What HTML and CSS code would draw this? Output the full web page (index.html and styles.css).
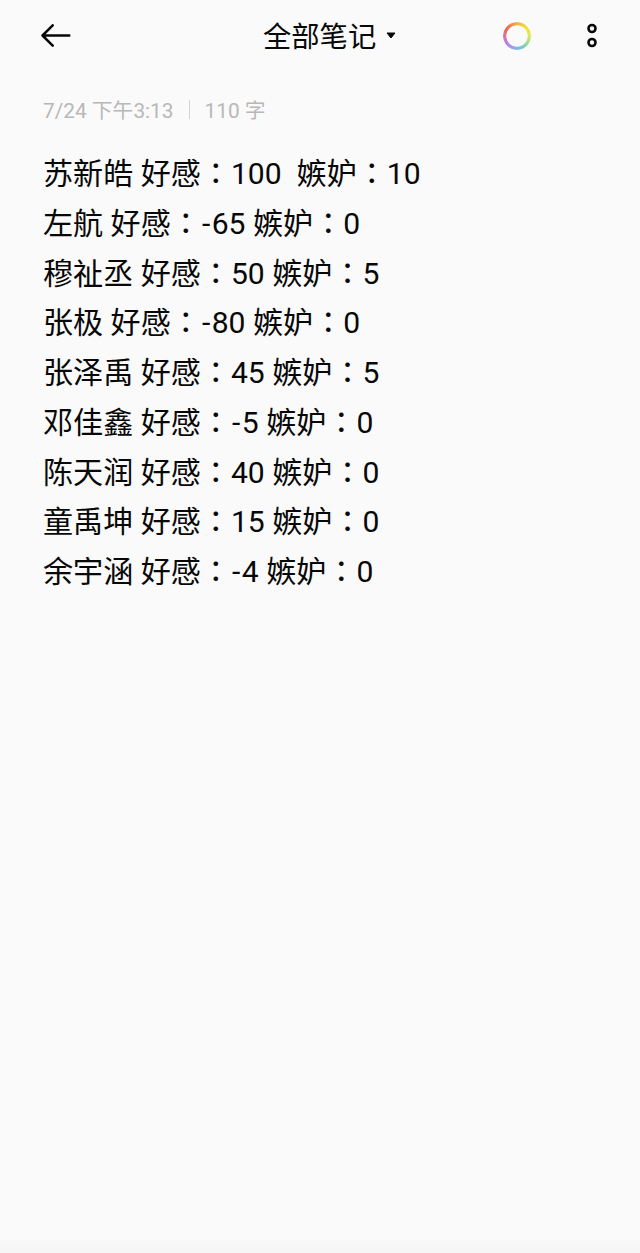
FILE: index.html
```html
<!DOCTYPE html>
<html lang="zh-CN">
<head>
<meta charset="utf-8">
<title>全部笔记</title>
<link rel="stylesheet" href="styles.css">
</head>
<body>
<header class="bar">
  <svg class="back" width="32" height="24" viewBox="0 0 32 24"><path d="M29.3 11.5H2.5M12.7 1.3L2.5 11.5L12.7 21.7"/></svg>
  <h1 class="title">全部笔记</h1>
  <svg class="caret" width="10" height="8" viewBox="0 0 10 8"><path d="M1 1H9L5 6Z"/></svg>
  <div class="ring"></div>
  <svg class="more" width="12" height="26" viewBox="0 0 12 26"><circle cx="6" cy="5.5" r="3.5"/><circle cx="6" cy="19.5" r="3.5"/></svg>
</header>
<div class="meta"><span>7/24 下午3:13</span><i class="sep"></i><span>110 字</span></div>
<main class="note">
<p>苏新皓 好感<span class="colon" lang="zh-TW">：</span>100&nbsp; 嫉妒<span class="colon" lang="zh-TW">：</span>10</p>
<p>左航 好感<span class="colon" lang="zh-TW">：</span><span class="minus">-</span>65 嫉妒<span class="colon" lang="zh-TW">：</span>0</p>
<p>穆祉丞 好感<span class="colon" lang="zh-TW">：</span>50 嫉妒<span class="colon" lang="zh-TW">：</span>5</p>
<p>张极 好感<span class="colon" lang="zh-TW">：</span><span class="minus">-</span>80 嫉妒<span class="colon" lang="zh-TW">：</span>0</p>
<p>张泽禹 好感<span class="colon" lang="zh-TW">：</span>45 嫉妒<span class="colon" lang="zh-TW">：</span>5</p>
<p>邓佳鑫 好感<span class="colon" lang="zh-TW">：</span><span class="minus">-</span>5 嫉妒<span class="colon" lang="zh-TW">：</span>0</p>
<p>陈天润 好感<span class="colon" lang="zh-TW">：</span>40 嫉妒<span class="colon" lang="zh-TW">：</span>0</p>
<p>童禹坤 好感<span class="colon" lang="zh-TW">：</span>15 嫉妒<span class="colon" lang="zh-TW">：</span>0</p>
<p>余宇涵 好感<span class="colon" lang="zh-TW">：</span><span class="minus">-</span>4 嫉妒<span class="colon" lang="zh-TW">：</span>0</p>
</main>
</body>
</html>
```
FILE: styles.css
```css
body { margin: 0; box-sizing: border-box; min-height: 1253px; background: linear-gradient(#fafafa 1238px, #f6f6f6 1245px); color: #080808; font-family: Roboto, "Noto Sans CJK SC", sans-serif; }
.bar { display: flex; align-items: center; height: 72px; padding-left: 40px; }
.back { fill: none; stroke: #080808; stroke-width: 2.5; stroke-linecap: round; stroke-linejoin: round; }
.title { margin: 0 0 0 191px; padding-top: 4px; width: 114px; font-size: 28.3px; font-weight: 400; line-height: 40px; white-space: nowrap; }
.caret { margin-left: 9px; fill: #080808; stroke: #080808; stroke-linejoin: round; }
.ring { width: 28px; height: 28px; margin-left: 107px; border-radius: 50%; background: conic-gradient(#f5b04a, #f2e33c 50deg, #dcea50 90deg, #8fd9a0 130deg, #72bde8 170deg, #9fa0ea 205deg, #c478e6 240deg, #e0708f 275deg, #ec6656 305deg, #f5b04a); mask: radial-gradient(circle, transparent 10.3px, #000 11.1px); }
.more { margin-left: 55px; fill: none; stroke: #080808; stroke-width: 2.6; }
.meta { display: flex; align-items: center; height: 30px; margin: 22px 0 0 43px; font-size: 20.8px; color: #b8b8b8; }
.sep { width: 1px; height: 19px; margin: 0 15px; background: #d4d4d4; }
.note { margin: 25px 0 0 43px; font-size: 30.08px; line-height: 49.75px; white-space: nowrap; }
.note p { margin: 0; height: 49.75px; }
.colon { font-family: "Noto Sans CJK TC", sans-serif; line-height: 1; }
.minus { margin: 0 1.5px 0 1px; }
```
